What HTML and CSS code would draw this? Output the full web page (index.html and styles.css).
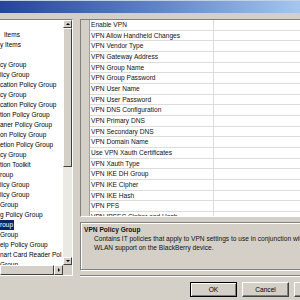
FILE: index.html
```html
<!DOCTYPE html>
<html lang="en">

<head>
    <meta charset="UTF-8">
    <meta name="viewport" content="width=device-width, initial-scale=1.0">
    <title>IT Policy</title>
    <link rel="stylesheet" href="styles.css">
</head>

<body>
    <div class="titlebar"></div>

    <div class="main">
        <div class="tree">
            <div class="tree-list">
                <div class="item"></div>
                <div class="item indent">Items</div>
                <div class="item">y Items</div>
                <div class="item"></div>
                <div class="item">cy Group</div>
                <div class="item">licy Group</div>
                <div class="item">cation Policy Group</div>
                <div class="item">cy Group</div>
                <div class="item">cation Policy Group</div>
                <div class="item">tion Policy Group</div>
                <div class="item">aner Policy Group</div>
                <div class="item">on Policy Group</div>
                <div class="item">etion Policy Group</div>
                <div class="item">cy Group</div>
                <div class="item">tion Toolkit</div>
                <div class="item">roup</div>
                <div class="item">licy Group</div>
                <div class="item">licy Group</div>
                <div class="item">Group</div>
                <div class="item">g Policy Group</div>
                <div class="item"><span class="selected">roup</span></div>
                <div class="item">Group</div>
                <div class="item">elp Policy Group</div>
                <div class="item">nart Card Reader Pol</div>
                <div class="item">Group</div>
            </div>
            <div class="vscroll">
                <div class="sbtn"><span class="arrow-up"></span></div>
                <div class="thumb-v"></div>
                <div class="track"></div>
                <div class="sbtn"><span class="arrow-down"></span></div>
            </div>
            <div class="hscroll">
                <div class="thumb-h"></div>
                <div class="sbtn"><span class="arrow-right"></span></div>
            </div>
            <div class="corner"></div>
        </div>

        <div class="right">
            <div class="grid">
                <div class="row"><div class="hdr"></div><div class="cell">Enable VPN</div><div class="cell"></div></div>
                <div class="row"><div class="hdr"></div><div class="cell">VPN Allow Handheld Changes</div><div class="cell"></div></div>
                <div class="row"><div class="hdr"></div><div class="cell">VPN Vendor Type</div><div class="cell"></div></div>
                <div class="row"><div class="hdr"></div><div class="cell">VPN Gateway Address</div><div class="cell"></div></div>
                <div class="row"><div class="hdr"></div><div class="cell">VPN Group Name</div><div class="cell"></div></div>
                <div class="row"><div class="hdr"></div><div class="cell">VPN Group Password</div><div class="cell"></div></div>
                <div class="row"><div class="hdr"></div><div class="cell">VPN User Name</div><div class="cell"></div></div>
                <div class="row"><div class="hdr"></div><div class="cell">VPN User Password</div><div class="cell"></div></div>
                <div class="row"><div class="hdr"></div><div class="cell">VPN DNS Configuration</div><div class="cell"></div></div>
                <div class="row"><div class="hdr"></div><div class="cell">VPN Primary DNS</div><div class="cell"></div></div>
                <div class="row"><div class="hdr"></div><div class="cell">VPN Secondary DNS</div><div class="cell"></div></div>
                <div class="row"><div class="hdr"></div><div class="cell">VPN Domain Name</div><div class="cell"></div></div>
                <div class="row"><div class="hdr"></div><div class="cell">Use VPN Xauth Certificates</div><div class="cell"></div></div>
                <div class="row"><div class="hdr"></div><div class="cell">VPN Xauth Type</div><div class="cell"></div></div>
                <div class="row"><div class="hdr"></div><div class="cell">VPN IKE DH Group</div><div class="cell"></div></div>
                <div class="row"><div class="hdr"></div><div class="cell">VPN IKE Cipher</div><div class="cell"></div></div>
                <div class="row"><div class="hdr"></div><div class="cell">VPN IKE Hash</div><div class="cell"></div></div>
                <div class="row"><div class="hdr"></div><div class="cell">VPN PFS</div><div class="cell"></div></div>
                <div class="row"><div class="hdr"></div><div class="cell">VPN IPSEC Cipher and Hash</div><div class="cell"></div></div>
            </div>

            <div class="desc">
                <div class="desc-title">VPN Policy Group</div>
                <div class="desc-text">Contains IT policies that apply to VPN settings to use in conjunction with</div>
                <div class="desc-text">WLAN support on the BlackBerry device.</div>
            </div>

            <div class="separator"></div>
        </div>
    </div>

    <div class="buttons">
        <button class="btn default">OK</button>
        <button class="btn">Cancel</button>
        <button class="btn">Help</button>
    </div>
</body>

</html>
```

FILE: styles.css
```css
* {
    box-sizing: border-box;
}

body {
    margin: 0;
    width: 300px;
    height: 300px;
    overflow: hidden;
    background: #d4d0c8;
    font-family: "Liberation Sans", Arial, sans-serif;
    font-size: 6.6px;
    color: #111;
}

.titlebar {
    height: 13px;
    border-top: 1px solid #c4d0e6;
    background: linear-gradient(to right, #26449a, #5e80c4 50%, #a4c6ee);
}

.main {
    display: flex;
    padding-top: 6px;
    width: 340px;
}

/* left tree */
.tree {
    width: 73px;
    height: 257px;
    border-top: 1px solid #808080;
    border-right: 1px solid #fff;
    border-bottom: 1px solid #fff;
    display: grid;
    grid-template-columns: 63px 9px;
    grid-template-rows: 245px 10px;
    flex-shrink: 0;
}

.tree-list {
    background: #fff;
    overflow: hidden;
}

.item {
    height: 10px;
    line-height: 10px;
    white-space: nowrap;
    color: #000;
    font-size: 6.5px;
}

.item.indent {
    padding-left: 4px;
}

.selected {
    display: inline-block;
    background: #0a246a;
    color: #fff;
    padding-right: 1px;
}

.vscroll {
    display: flex;
    flex-direction: column;
}

.sbtn {
    height: 8px;
    background: #d4d0c8;
    border: 1px solid;
    border-color: #fff #404040 #404040 #fff;
    display: flex;
    align-items: center;
    justify-content: center;
    flex-shrink: 0;
}

.thumb-v {
    height: 139px;
    background: #d4d0c8;
    border: 1px solid;
    border-color: #fff #404040 #404040 #fff;
}

.track {
    flex: 1;
    background: #ebe9e4;
}

.arrow-up {
    border-left: 2px solid transparent;
    border-right: 2px solid transparent;
    border-bottom: 2px solid #000;
}

.arrow-down {
    border-left: 2px solid transparent;
    border-right: 2px solid transparent;
    border-top: 2px solid #000;
}

.arrow-right {
    border-top: 2px solid transparent;
    border-bottom: 2px solid transparent;
    border-left: 2px solid #000;
}

.hscroll {
    display: flex;
}

.thumb-h {
    flex: 1;
    background: #d4d0c8;
    border: 1px solid;
    border-color: #fff #404040 #404040 #fff;
}

.hscroll .sbtn {
    width: 9px;
    height: 10px;
}

.corner {
    background: #d4d0c8;
}

/* right side */
.right {
    margin-left: 7px;
    width: 240px;
    display: flex;
    flex-direction: column;
}

.grid {
    height: 198px;
    border: 1px solid;
    border-color: #808080 #fff #fff #808080;
    background: #fff;
    overflow: hidden;
}

.row {
    display: grid;
    grid-template-columns: 9px 124px 1fr;
    height: 10.67px;
}

.hdr {
    background: #d4d0c8;
    border-right: 1px solid #a0a0a0;
}

.cell {
    border-bottom: 1px solid #dcdcdc;
    border-right: 1px solid #dcdcdc;
    padding-left: 1px;
    line-height: 10px;
    white-space: nowrap;
    overflow: hidden;
}

.desc {
    margin-top: 5px;
    height: 48px;
    border: 1px solid #808080;
    box-shadow: inset 1px 1px 0 #fff, 1px 1px 0 #fff;
    padding: 2px 0 0 3px;
}

.desc-title {
    font-weight: bold;
    line-height: 9px;
}

.desc-text {
    padding-left: 10px;
    line-height: 9px;
    white-space: nowrap;
}

.separator {
    margin-top: 5px;
    height: 2px;
    border-top: 1px solid #808080;
    border-bottom: 1px solid #fff;
}

/* bottom buttons */
.buttons {
    display: flex;
    gap: 5px;
    padding: 5px 0 0 190px;
    width: 340px;
}

.btn {
    width: 47px;
    height: 15px;
    padding: 0;
    background: #d4d0c8;
    border: 1px solid;
    border-color: #fff #404040 #404040 #fff;
    box-shadow: inset -1px -1px 0 #808080;
    font-family: inherit;
    font-size: 6.6px;
    color: #000;
    flex-shrink: 0;
}

.btn.default {
    border: 1px solid #000;
    box-shadow: inset 1px 1px 0 #fff, inset -1px -1px 0 #808080;
}
```
